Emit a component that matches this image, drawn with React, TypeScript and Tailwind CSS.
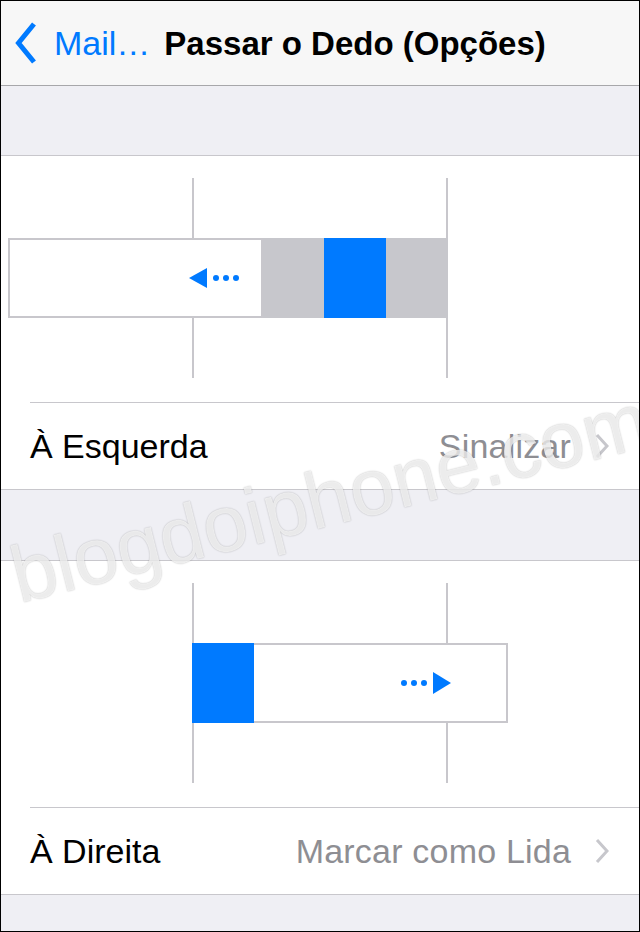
const FONT = "font-['Liberation_Sans','Helvetica_Neue',Arial,sans-serif]";

function BackChevron() {
  return (
    <svg width="22" height="42" viewBox="0 0 22 42" fill="none">
      <polyline points="19,2 3.5,21 19,40" stroke="#007aff" strokeWidth="5" strokeLinejoin="miter" />
    </svg>
  );
}

function Disclosure() {
  return (
    <svg width="14" height="26" viewBox="0 0 14 26" fill="none">
      <polyline points="2,2 12,13 2,24" stroke="#c7c7cc" strokeWidth="3" />
    </svg>
  );
}

// swipe illustration: two guide lines with a message cell sliding over them
function SwipeDiagram({ direction }: { direction: "left" | "right" }) {
  return (
    <svg width="638" height="246" viewBox="0 0 638 246" className="block">
      <rect x="191" y="22" width="2" height="200" fill="#c8c7cc" />
      <rect x="445" y="22" width="2" height="200" fill="#c8c7cc" />
      {direction === "left" ? (
        <>
          <rect x="261" y="82" width="186" height="80" fill="#c7c7cc" />
          <rect x="8" y="83" width="253" height="78" fill="#fff" stroke="#c8c7cc" strokeWidth="2" />
          <rect x="323" y="82" width="62" height="80" fill="#007aff" />
          <polygon points="188,122 206,112 206,132" fill="#007aff" />
          <circle cx="215" cy="122" r="3" fill="#007aff" />
          <circle cx="225" cy="122" r="3" fill="#007aff" />
          <circle cx="235" cy="122" r="3" fill="#007aff" />
        </>
      ) : (
        <>
          <rect x="192" y="83" width="314" height="78" fill="#fff" stroke="#c8c7cc" strokeWidth="2" />
          <rect x="191" y="82" width="62" height="80" fill="#007aff" />
          <circle cx="403" cy="122" r="3" fill="#007aff" />
          <circle cx="413" cy="122" r="3" fill="#007aff" />
          <circle cx="423" cy="122" r="3" fill="#007aff" />
          <polygon points="432,111 450,122 432,133" fill="#007aff" />
        </>
      )}
    </svg>
  );
}

function OptionRow({ label, value }: { label: string; value: string }) {
  return (
    <div className="flex h-[86px] items-center pl-[29px] pr-[30px]">
      <span className="flex-1 text-[34px] leading-none text-black">{label}</span>
      <span className="text-[34px] leading-none tracking-[0.2px] text-[#8e8e93]">{value}</span>
      <span className="ml-[24px] flex items-center">
        <Disclosure />
      </span>
    </div>
  );
}

function SwipeSection({ direction, label, value }: { direction: "left" | "right"; label: string; value: string }) {
  return (
    <section className="border-y border-[#c8c7cc] bg-white">
      <SwipeDiagram direction={direction} />
      <div className="ml-[29px] h-px bg-[#c8c7cc]" />
      <OptionRow label={label} value={value} />
    </section>
  );
}

export default function App() {
  return (
    <div className={`relative h-[932px] w-[640px] overflow-hidden border border-black bg-[#efeff4] ${FONT}`}>
      <header className="flex h-[85px] items-center border-b border-[#a7a7aa] bg-[#f7f7f7] pl-[14px]">
        <BackChevron />
        <span className="ml-[17px] text-[34px] leading-none text-[#007aff]">Mail…</span>
        <h1 className="ml-[14px] text-[33px] font-bold leading-none text-black">Passar o Dedo (Opções)</h1>
      </header>

      <div className="h-[69px]" />
      <SwipeSection direction="left" label="À Esquerda" value="Sinalizar" />
      <div className="h-[70px]" />
      <SwipeSection direction="right" label="À Direita" value="Marcar como Lida" />

      <div className="pointer-events-none absolute left-[-11px] top-[457px] h-[80px] w-[680px] -rotate-[14deg] text-center text-[80px] leading-none text-white/75 [text-shadow:0_0_1.5px_rgba(0,0,0,0.3)]">
        blogdoiphone.com
      </div>
    </div>
  );
}
